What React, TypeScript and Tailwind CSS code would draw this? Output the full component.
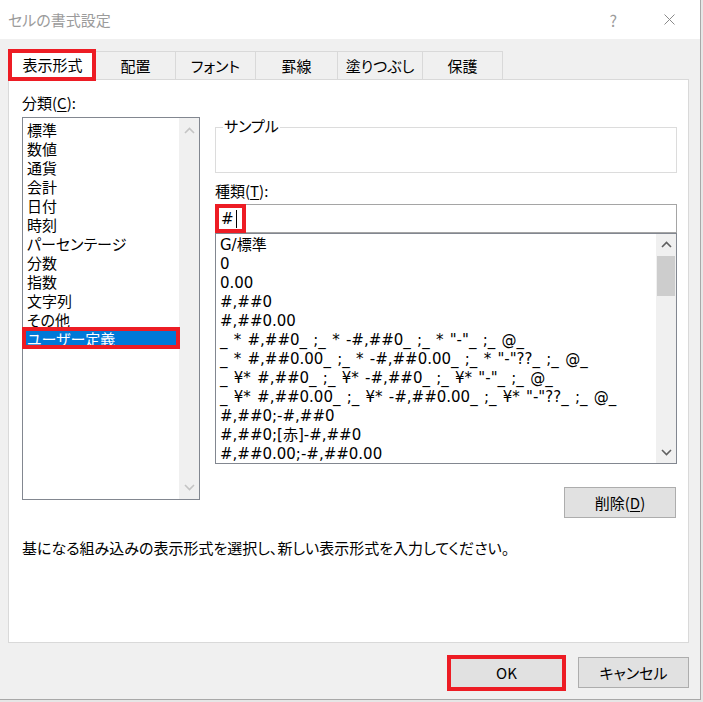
const CATEGORIES = [
  "標準",
  "数値",
  "通貨",
  "会計",
  "日付",
  "時刻",
  "パーセンテージ",
  "分数",
  "指数",
  "文字列",
  "その他",
  "ユーザー定義",
];

const FORMATS = [
  "G/標準",
  "0",
  "0.00",
  "#,##0",
  "#,##0.00",
  '_ * #,##0_ ;_ * -#,##0_ ;_ * "-"_ ;_ @_',
  '_ * #,##0.00_ ;_ * -#,##0.00_ ;_ * "-"??_ ;_ @_',
  '_ ¥* #,##0_ ;_ ¥* -#,##0_ ;_ ¥* "-"_ ;_ @_',
  '_ ¥* #,##0.00_ ;_ ¥* -#,##0.00_ ;_ ¥* "-"??_ ;_ @_',
  "#,##0;-#,##0",
  "#,##0;[赤]-#,##0",
  "#,##0.00;-#,##0.00",
];

const TABS = [
  { label: "配置", w: "w-[80px]" },
  { label: "フォント", w: "w-[80px]" },
  { label: "罫線", w: "w-[82px]" },
  { label: "塗りつぶし", w: "w-[85px]" },
  { label: "保護", w: "w-[80px]" },
];

function Chevron({ up, color }: { up?: boolean; color: string }) {
  return (
    <svg width="11" height="7" viewBox="0 0 11 7" fill="none">
      <polyline
        points={up ? "1,6 5.5,1.5 10,6" : "1,1 5.5,5.5 10,1"}
        stroke={color}
        strokeWidth="1.6"
      />
    </svg>
  );
}

export default function App() {
  return (
    <div className="w-[703px] h-[702px] bg-[#e6e6e6] overflow-hidden text-[15px] text-black font-['Noto_Sans_CJK_JP','Noto_Sans',sans-serif] [font-feature-settings:'palt']">
      <div className="w-[701px] h-[700px] bg-[#f0f0f0] border-r border-b border-[#a8a8a8] flex flex-col">
        {/* title bar */}
        <div className="h-[39px] shrink-0 bg-white flex items-center pl-2 pr-[25px]">
          <span className="text-[#9b9b9b] leading-5">セルの書式設定</span>
          <span className="ml-auto mr-[47px] text-[#9b9b9b] text-[16px] leading-5">?</span>
          <svg width="11" height="11" viewBox="0 0 11 11">
            <path d="M0.5 0.5 L10.5 10.5 M10.5 0.5 L0.5 10.5" stroke="#8a8a8a" strokeWidth="1" />
          </svg>
        </div>

        {/* tabs */}
        <div className="mt-[12px] h-[28px] pl-[9px] flex items-stretch relative z-10">
          <div className="relative w-[87px] -mt-[2px] h-[31px] bg-white border-t border-l border-r border-[#d9d9d9] flex items-center justify-center">
            <span className="leading-5">表示形式</span>
            <div className="absolute -left-[2px] -right-[1px] -top-[1px] -bottom-[1px] border-4 border-[#ed1c24]" />
          </div>
          {TABS.map((t) => (
            <div
              key={t.label}
              className={`${t.w} bg-[#f0f0f0] border-t border-r border-[#d9d9d9] flex items-center justify-center`}
            >
              <span className="leading-5">{t.label}</span>
            </div>
          ))}
        </div>

        {/* panel */}
        <div className="ml-[8px] w-[681px] h-[564px] shrink-0 bg-white border border-[#d9d9d9] pl-[13px] pt-[13px]">
          <div className="flex">
            {/* category column */}
            <div className="w-[178px] flex flex-col">
              <div className="h-5 leading-5">
                分類(<span className="underline underline-offset-2">C</span>):
              </div>
              <div className="mt-[4px] h-[383px] border border-[#828790] flex">
                <div className="flex-1 pt-[2px] px-[1px]">
                  {CATEGORIES.map((c) => {
                    const sel = c === "ユーザー定義";
                    return (
                      <div
                        key={c}
                        className={`relative h-[19px] leading-[19px] pl-[3px] ${sel ? "bg-[#0078d7] text-white" : ""}`}
                      >
                        {c}
                        {sel && (
                          <div className="absolute -left-[2px] -right-[2px] -top-[2px] -bottom-[1px] border-4 border-[#ed1c24]" />
                        )}
                      </div>
                    );
                  })}
                </div>
                <div className="w-[20px] bg-[#f0f0f0] flex flex-col justify-between">
                  <div className="h-[24px] flex items-center justify-center">
                    <Chevron up color="#c4c4c4" />
                  </div>
                  <div className="h-[24px] flex items-center justify-center">
                    <Chevron color="#c4c4c4" />
                  </div>
                </div>
              </div>
            </div>

            {/* format column */}
            <div className="ml-[15px] w-[462px] flex flex-col">
              <div className="relative mt-[34px] h-[46px] border border-[#dcdcdc]">
                <span className="absolute -top-[12px] left-[7px] bg-white px-px leading-5">サンプル</span>
              </div>
              <div className="mt-[8px] h-5 leading-5">
                種類(<span className="underline underline-offset-2">T</span>):
              </div>
              <div className="relative mt-[3px] h-[29px] border border-[#a5a5a5] flex items-center pl-[5px] font-['DejaVu_Sans','Noto_Sans_CJK_JP',sans-serif]">
                <span className="leading-5">#</span>
                <span className="ml-[2px] w-px h-[18px] bg-black" />
                <div className="absolute -left-px -top-px w-[31px] h-[29px] border-4 border-[#ed1c24]" />
              </div>
              <div className="h-[231px] border border-[#828790] flex">
                <div className="flex-1 pt-[2px] pl-[4px] font-['DejaVu_Sans','Noto_Sans_CJK_JP',sans-serif] [word-spacing:1.5px]">
                  {FORMATS.map((f) => (
                    <div key={f} className="h-[19px] leading-[19px] whitespace-pre">
                      {f}
                    </div>
                  ))}
                </div>
                <div className="w-[20px] bg-[#f0f0f0] flex flex-col">
                  <div className="h-[20px] flex items-center justify-center">
                    <Chevron up color="#606060" />
                  </div>
                  <div className="mt-[2px] mx-px h-[40px] bg-[#cdcdcd]" />
                  <div className="mt-auto h-[22px] flex items-center justify-center">
                    <Chevron color="#606060" />
                  </div>
                </div>
              </div>
              <button className="mt-[23px] self-end mr-px w-[112px] h-[31px] bg-[#e1e1e1] border border-[#adadad] leading-5">
                削除(<span className="underline underline-offset-2">D</span>)
              </button>
            </div>
          </div>
          <div className="mt-[20px] h-5 leading-5">
            基になる組み込みの表示形式を選択し、新しい表示形式を入力してください。
          </div>
        </div>

        {/* bottom buttons */}
        <div className="mt-[14px] flex justify-end pr-[11px] gap-[15px]">
          <div className="relative">
            <button className="w-[113px] h-[31px] bg-[#e1e1e1] border border-[#0078d7] leading-5">OK</button>
            <div className="absolute -left-[3px] -right-[3px] -top-[2px] -bottom-[3px] border-4 border-[#ed1c24]" />
          </div>
          <button className="w-[111px] h-[31px] bg-[#e1e1e1] border border-[#adadad] leading-5">キャンセル</button>
        </div>
      </div>
    </div>
  );
}
